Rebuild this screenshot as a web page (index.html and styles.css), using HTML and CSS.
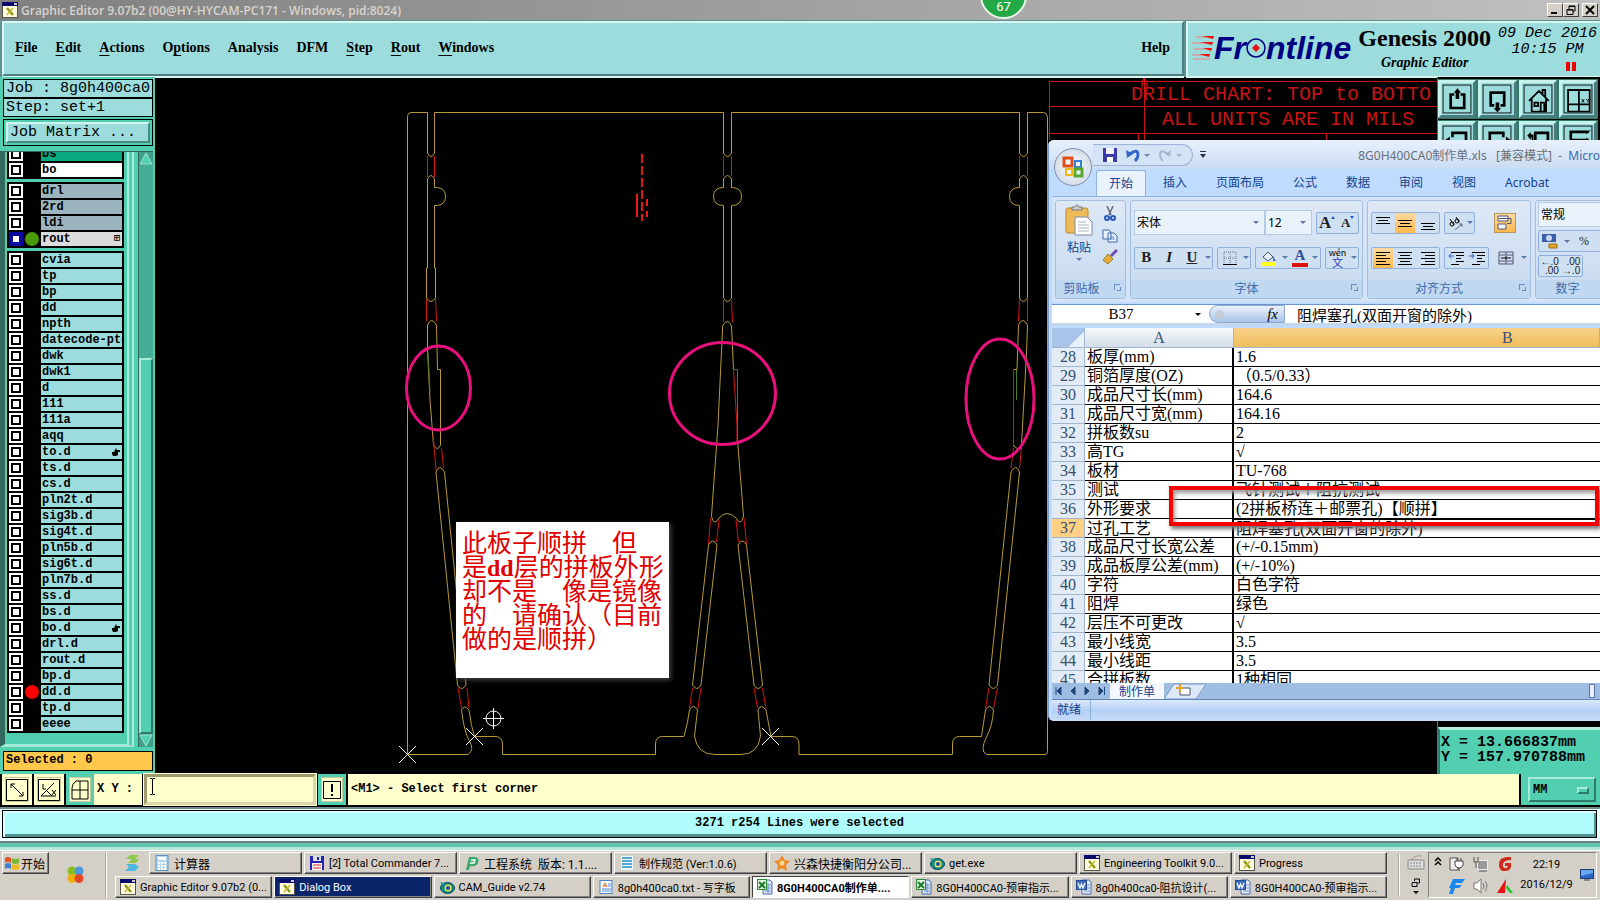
FILE: index.html
```html
<!DOCTYPE html>
<html lang="en">
<head>
    <meta charset="UTF-8">
    <meta name="viewport" content="width=device-width, initial-scale=1.0">
    <title>Graphic Editor</title>
    <link rel="stylesheet" href="styles.css">
</head>
<body>

<!-- Shared icons -->
<svg width="0" height="0" class="defs">
    <symbol id="i-x" viewBox="0 0 16 16"><rect x="0.5" y="0.5" width="15" height="15" fill="#fffbe0" stroke="#55554a"/><rect width="16" height="4" fill="#0a0a6a"/><path d="M12 1h3v2h-3z" fill="#ccc"/><path d="M5 6l6 7" stroke="#8d9a10" stroke-width="2.4"/><path d="M11 6l-6 7" stroke="#c5b52a" stroke-width="1.4"/></symbol>
    <symbol id="i-xls" viewBox="0 0 16 16"><path d="M6 1h7l2 2v12H6z" fill="#dce8fa" stroke="#4668a8"/><path d="M8 6h6M8 9h6M8 12h6M11 4v10" stroke="#6f90cc"/><rect x="0.5" y="0.5" width="9" height="10" fill="#e0f2dc" stroke="#2f8a3a"/><path d="M2 3l6 6M8 3L2 9" stroke="#1d7a2c" stroke-width="2"/></symbol>
    <symbol id="i-doc" viewBox="0 0 16 16"><path d="M6 1h7l2 2v12H6z" fill="#e6eefa" stroke="#4668a8"/><path d="M8 6h6M8 9h6M8 12h6" stroke="#6f90cc"/><rect x="0.5" y="1.5" width="10" height="9" fill="#3f6fc4" stroke="#234b94"/><path d="M2 4l2 5 1.500-4L7 9l2-5" fill="none" stroke="#fff" stroke-width="1.300"/></symbol>
    <symbol id="i-eye" viewBox="0 0 16 16"><ellipse cx="8.500" cy="9" rx="7" ry="5.500" fill="#168a86" stroke="#0b4d56"/><circle cx="9" cy="9" r="3.500" fill="#e8e060"/><circle cx="9" cy="9" r="2" fill="#1450a0"/><path d="M1 3l5 1-3 2z" fill="#19a0a0"/></symbol>
</svg>

<div class="titlebar">
    <svg width="16" height="16"><use href="#i-x"/></svg>
    <span class="title">Graphic Editor 9.07b2 (00@HY-HYCAM-PC171 - Windows, pid:8024)</span>
    <button class="win-btn" aria-label="Minimize"><svg width="10" height="10"><path d="M1 8h6" stroke="#000" stroke-width="2"/></svg></button>
    <button class="win-btn" aria-label="Restore"><svg width="10" height="10"><path d="M3 4V1h6v5H7M3 1.500h6M1 4.500h6v5H1zM1 5h6" fill="none" stroke="#000"/></svg></button>
    <button class="win-btn close" aria-label="Close"><svg width="10" height="10"><path d="M1 1l8 8M9 1L1 9" stroke="#000" stroke-width="2"/></svg></button>
</div>
<div class="badge">67</div>

<header class="header">
    <nav class="menubar">
        <button><u>F</u>ile</button>
        <button><u>E</u>dit</button>
        <button><u>A</u>ctions</button>
        <button>O<u>p</u>tions</button>
        <button>Analysis</button>
        <button>DFM</button>
        <button><u>S</u>tep</button>
        <button><u>R</u>out</button>
        <button><u>W</u>indows</button>
        <button class="help">Help</button>
    </nav>
    <div class="brand">
        <div class="logo">
            <svg width="22" height="26"><path d="M4 2h18M0 8h20M2 14h18M0 20h18M1 24h17" stroke="#f08080"/><path d="M10 1h12l-1 3zM8 7h13l-1 3zM11 13h9l-1 3zM7 19h11l-1 3z" fill="#f01010"/></svg>
            <span>Fr</span><svg width="20" height="22"><circle cx="10" cy="11" r="9" fill="none" stroke="#000080" stroke-width="1.500"/><path d="M10 7l4 4-4 4-4-4z" fill="#f01010"/></svg><span>ntline</span>
        </div>
        <div class="product">
            <div class="product-name">Genesis 2000</div>
            <div class="product-sub">Graphic Editor</div>
        </div>
        <div class="date">
            <div>09 Dec 2016</div>
            <div>10:15 PM</div>
            <div class="pause"><i></i><i></i></div>
        </div>
    </div>
</header>

<main class="main">
    <aside class="side">
        <div class="info">Job : 8g0h400ca0</div>
        <div class="info">Step: set+1</div>
        <div class="matrix"><button>Job Matrix ...</button></div>
        <div class="layers">
            <div class="layer-list" id="layers"></div>
            <div class="scroll">
                <svg width="14" height="13"><rect width="14" height="13" fill="#3f9f88"/><path d="M7 1L1 12h12z" fill="#52ceb0" stroke="#9fe8d4"/></svg>
                <div class="trough"><div class="thumb"></div></div>
                <svg width="14" height="13"><rect width="14" height="13" fill="#3f9f88"/><path d="M1 1h12L7 12z" fill="#52ceb0" stroke="#9fe8d4"/></svg>
            </div>
        </div>
        <div class="selected">Selected : 0</div>
    </aside>

    <section class="canvas">
        <svg width="1282" height="697" viewBox="155 77 1282 697">
            <!-- drill chart -->
            <g stroke="#c81414" fill="none">
                <path d="M1049.500 140V81.500H1437M1049 106.500H1437M1049 133.500H1437M1144.500 78V140M1138.500 134v6M1326.500 134v6"/>
                <path d="M1142 90v-8l2-4 3 4v8M1142 84h5" stroke="#f01414"/>
            </g>
            <g class="chart-text">
                <text x="1131" y="100">DRILL CHART: TOP to BOTTO</text>
                <text x="1162" y="125">ALL UNITS ARE IN MILS</text>
            </g>

            <!-- panel outline -->
            <g class="gold">
                <path d="M427.500 112.500H411q-3.500 0-3.500 4V754.500H468q7-5 1-14Q464 731 461.500 710q3-6 7.500 0 2 16 5.500 26.500H495q7.500 0 7.500 8v10H655.500V744q0-7.500 7-7.500H684Q688 722 689.500 710q4-7 8 0L694.500 736Q697 754.500 715 754.500H741Q758 754.500 760.500 736L758 710q3-7 8 0L771 736.500H792q7 0 7 8v10H952.500V744q0-7.500 7-7.500H981.500L985.500 710q4-7 8 0-1 16-7 27-7 14 0 17.500H1045q2.500 0 2.500-3V117q-1-4.500-4-4.500H1027.500V153q-4 7-8 0V112.500H731.500V153q-4 7-8 0V112.500H434.500V153q-3.500 7-7 0z"/>
                <path d="M427.500 268V179q3.500-7 7 0V187.500h3q8 1 8 9t-8 9h-3V268h1V298q-4.500 7-9 0V268z"/>
                <path d="M723.500 298V205.500q-10 0-10-9t10-9V179q4-7 8 0v8.500q10 0 10 9t-10 9V298q-4 7-8 0"/>
                <path d="M1019.500 298V205.500q-10 0-10-9t10-9V179q4-7 8 0V298q-4 7-8 0"/>
                <path d="M433.500 445L430 400 427.500 350V325q4-9 9 0L437.500 369.500h3V445q-3 7-7 0"/>
                <path d="M711.500 516L718 425 722.500 330V326q5-9 9 0l2 43M711.500 516q2 11 7.500 2 8-9 17 0 5 9 7.500-2L737.500 440"/>
                <path d="M1013.500 445V369.500h3.500L1018.500 325q4-9 9 0L1026.500 353 1021.500 445q-4 7-8 0"/>
                <path d="M444.500 472q-5-9-8.500 0L457.500 685q4 7 8.500 0z"/>
                <path d="M708.500 545q4-8 8.500 0L701 685q-4 7-8.500 0zM746.500 545q-4-8-8.500 0L754 685q4 7 8.500 0z"/>
                <path d="M1011 472q5-9 8.500 0L997.500 685q-4 7-8.500 0z"/>
            </g>
            <g class="red">
                <path d="M427.500 156v21M434.500 156v21M723.500 156v20M731.500 156v20M1019.500 156v20M1027.500 156v20"/>
                <path d="M426.500 299v22M435.500 299l1 22M723.500 300v22M731.500 300l1 22M1019.500 299l-1 22M1027.500 299v22"/>
                <path d="M433 434L436 470M441.500 448L443.500 468M1013.500 448L1011 468M1021.500 448L1019.500 468"/>
                <path d="M710.500 518L708.500 544M719 520L716.500 542M744 518L746.500 544M736 520L738.500 542"/>
                <path d="M458 688L461.500 708M467 688L469 708M692.500 688L689.500 708M701 688L698 708M762.500 688L766 708M754 688L757.500 708M989 688L985.500 708M997.500 688L993.500 708"/>
                <path d="M733.500 370L737 425V442M1013.500 369V447"/>
            </g>
            <path d="M733.500 369.500h4V440M1016.500 370v30M428 352l2 40" fill="none" stroke="#4c7c28"/>
            <path d="M642 154V221" stroke="#e01818" stroke-width="2" stroke-dasharray="9 3"/>
            <path d="M637 194v23M647 199v7M647 211v6" stroke="#f01818" stroke-width="2"/>

            <!-- markers -->
            <g stroke="#fff" fill="none">
                <path d="M399 746l17 17M416 746l-17 17M466 728l17 17M483 728l-17 17M762 728l17 17M779 728l-17 17"/>
                <circle cx="493.500" cy="718.500" r="7.500"/>
                <path d="M483 718.500h21M493.500 708v21"/>
            </g>
            <g stroke="#e8107c" stroke-width="3" fill="none">
                <ellipse cx="438.500" cy="388" rx="32" ry="42"/>
                <ellipse cx="722.500" cy="393.500" rx="53" ry="51"/>
                <ellipse cx="1000" cy="399" rx="34" ry="60"/>
            </g>
        </svg>
    </section>

    <aside class="tools">
        <div class="tool-grid">
            <button aria-label="Pan up"><svg width="32" height="32"><path d="M12 10H8v15h15V10h-4" class="thick"/><path d="M15.500 3l4 5h-2v7h-4V8h-2z"/></svg></button>
            <button aria-label="Pan down"><svg width="32" height="32"><path d="M12 22H8V8h15v14h-4" class="thick"/><path d="M15.500 30l4-5h-2v-6h-4v6h-2z"/></svg></button>
            <button aria-label="Home"><svg width="32" height="32"><path d="M5 17L16 6l11 11M8 15v14h16V15M20 10V5h3v8M11 19h4v4h-4zM18 29V19h4v10" class="house"/></svg></button>
            <button aria-label="Zoom XY"><svg width="32" height="32"><path d="M4 5h24v24H4zM4 21h24M16 5v24" class="house"/><path d="M19 15l3 4M22 15l-3 4M24 15l2 2 1-2M26 17v2" class="thin"/></svg></button>
            <button aria-label="Pan left"><svg width="32" height="32"><path d="M10 12V7h15v16H10" class="thick"/><path d="M2 15l5-4v8z"/></svg></button>
            <button aria-label="Pan right"><svg width="32" height="32"><path d="M22 12V7H7v16h15" class="thick"/><path d="M30 15l-5-4v8z"/></svg></button>
            <button aria-label="Previous"><svg width="32" height="32"><path d="M12 7h14v16H12z" class="thick"/><path d="M3 10l4-4v3h3v8H8v-5H7v3z"/></svg></button>
            <button aria-label="Zoom layers"><svg width="32" height="32"><path d="M27 6H7v9h20" class="thick"/><path d="M24 8l5-4M24 13l5 4" class="thin"/></svg></button>
        </div>
        <div class="coords">
            <div>X = 13.666837mm</div>
            <div>Y = 157.970788mm</div>
        </div>
    </aside>
</main>

<div class="prompt">
    <button class="p-btn" aria-label="Select by line"><svg width="22" height="22"><path d="M.5.5h21v21H.5zM5 5l12 12M5 9V5h4M17 13v4h-4" class="thin"/></svg></button>
    <button class="p-btn" aria-label="Angle"><svg width="22" height="22"><path d="M.5.5h21v21H.5zM3 17L16 4M3 17h15M5 5v5h3M9 12l5 5M14 11l4 5M18 11l-4 5" class="thin"/></svg></button>
    <button class="p-btn green" aria-label="Grid"><svg width="18" height="20"><path d="M1 19V8q0-4 4-7h12v18zM9 1v18M1 10h16" class="thin"/></svg></button>
    <label for="xy">X Y :</label>
    <input id="xy" type="text">
    <button class="p-btn green" aria-label="Alert"><svg width="18" height="18"><path d="M.5.5h17v17H.5z" class="thin"/><path d="M8 3h2v8H8zM8 13h2v2H8z"/></svg></button>
    <div class="hint">&lt;M1&gt; - Select first corner</div>
    <div class="units">
        <select aria-label="Units"><option>MM</option></select>
        <i></i>
    </div>
    <!-- text cursor over the XY box -->
    <svg class="ibeam" width="7" height="17"><path d="M1 .5h2l.5 1 .5-1h2M3.500 1v15M1 16.500h2l.5-1 .5 1h2" class="thin"/></svg>
</div>
<div class="message"><div>3271 r254 Lines were selected</div></div>
<div class="strip"></div>

<footer class="taskbar">
    <button class="start"><svg width="18" height="18"><path d="M2 4q3-2 6 0v5q-3-2-6 0z" fill="#e8502a"/><path d="M9 4q3 2 7 0v5q-4 2-7 0z" fill="#78b832"/><path d="M2 10q3-2 6 0v5q-3-2-6 0z" fill="#3a80d8"/><path d="M9 10q3 2 7 0v5q-4 2-7 0z" fill="#f0b820"/></svg>开始</button>
    <svg class="quick" width="18" height="18"><circle cx="5" cy="5" r="4.500" fill="#88c020"/><circle cx="12" cy="5" r="4.500" fill="#4898e0"/><circle cx="5" cy="12.500" r="4.500" fill="#f0b010"/><circle cx="12" cy="12.500" r="4.500" fill="#e04828"/></svg>
    <div class="tasks">
        <div class="task-row">
            <svg class="s-icon" width="18" height="18"><path d="M3 5l4-4h9l-4 4h4l-3 4H5l4-4z" fill="#8cc84a"/><path d="M16 13l-4 4H2l4-4-3-3h9z" fill="#50b8e0"/></svg>
            <button class="task cjk"><svg width="16" height="16"><rect x="2" y="0.500" width="12" height="15" fill="#b8d8f0" stroke="#5890c0"/><rect x="4" y="2" width="8" height="3" fill="#f4faff"/><path d="M4 8h8M4 11h8M4 14h8" stroke="#fff" stroke-width="2" stroke-dasharray="2 1"/></svg>计算器</button>
            <button class="task"><svg width="16" height="16"><path d="M1 1h14v14H1z" fill="#2424b0"/><path d="M4 1h8v5H4z" fill="#dde"/><path d="M8 2h2v3H8z" fill="#2424b0"/><path d="M3 8h10v7H3z" fill="#fff"/><path d="M4 10h8M4 13h8" stroke="#d02020"/></svg>[2] Total Commander 7...</button>
            <button class="task cjk"><svg width="16" height="16"><path d="M5 2h6q5 1 3 6-2 4-8 3l-1 4H2z" fill="#38a868"/><path d="M7 5h4l-1 3H6" stroke="#fff" stroke-width="1.500" fill="none"/></svg>工程系统&nbsp; 版本: 1.1....</button>
            <button class="task"><svg width="16" height="16"><path d="M2 1h12v14H2z" fill="#eaf6fc"/><path d="M3 3h10M3 6h10M3 9h10M3 12h10" stroke="#2a90c0" stroke-width="1.500"/></svg>制作规范 (Ver:1.0.6)</button>
            <button class="task cjk"><svg width="16" height="16"><path d="M8 0l2.500 5 5.500 1-4 4 1 6-5-3-5 3 1-6-4-4 5.500-1z" fill="#ee8820"/><circle cx="8" cy="8" r="2.500" fill="#ffd890"/></svg>兴森快捷衡阳分公司...</button>
            <button class="task"><svg width="16" height="16"><use href="#i-eye"/></svg>get.exe</button>
            <button class="task"><svg width="16" height="16"><use href="#i-x"/></svg>Engineering Toolkit 9.0...</button>
            <button class="task"><svg width="16" height="16"><use href="#i-x"/></svg>Progress</button>
        </div>
        <div class="task-row">
            <button class="task"><svg width="16" height="16"><use href="#i-x"/></svg>Graphic Editor 9.07b2 (0...</button>
            <button class="task flash"><svg width="16" height="16"><use href="#i-x"/></svg>Dialog Box</button>
            <button class="task"><svg width="16" height="16"><use href="#i-eye"/></svg>CAM_Guide v2.74</button>
            <button class="task"><svg width="16" height="16"><rect x="2" y="1.500" width="12" height="13" fill="#f4f8fe" stroke="#5080b8"/><path d="M5 8l2-4 2 4M6 7h2" stroke="#e07020" fill="none"/><path d="M10 5h3M10 7h3M4 10h9M4 12h9" stroke="#5890d0"/></svg>8g0h400ca0.txt - 写字板</button>
            <button class="task active"><svg width="16" height="16"><use href="#i-xls"/></svg>8G0H400CA0制作单....</button>
            <button class="task"><svg width="16" height="16"><use href="#i-xls"/></svg>8G0H400CA0-预审指示...</button>
            <button class="task"><svg width="16" height="16"><use href="#i-doc"/></svg>8g0h400ca0-阻抗设计(...</button>
            <button class="task"><svg width="16" height="16"><use href="#i-doc"/></svg>8G0H400CA0-预审指示...</button>
        </div>
    </div>
    <div class="lang">
        <svg width="18" height="16"><rect x="1" y="6" width="16" height="9" rx="1" fill="#ddd" stroke="#888"/><path d="M3 9h12M3 12h12M5 6q2-5 10-4" stroke="#888" fill="none" stroke-dasharray="2 1"/></svg>
        <svg width="10" height="18"><path d="M3.500 3V1h5v4h-2M1 4.500h5v4H1z" fill="none" stroke="#000"/><path d="M2 13h6l-3 3z"/></svg>
    </div>
    <div class="tray">
        <svg class="chev" width="8" height="10"><path d="M1 4l3-3 3 3M1 8l3-3 3 3" fill="none" stroke="#000" stroke-width="1.500"/></svg>
        <div class="tray-icons">
            <svg width="16" height="16"><path d="M1 2h8v12H1z" fill="#eee" stroke="#555"/><path d="M6 5h8v4q-1 3-4 3t-4-3zM8 2v3M12 2v3M10 12v3" fill="#fff" stroke="#444"/></svg>
            <svg width="16" height="16"><rect x="4.500" y="4.500" width="10" height="9" fill="#999" stroke="#eee"/><path d="M1 1v5h4V1M3 6v6M6 15h8" stroke="#555" fill="none"/></svg>
            <svg width="16" height="16"><path d="M14 1Q2 0 2 8t6 7q7 0 6-8H8v3h3q-1 3-3 2-3-1-2-4 1-4 8-4z" fill="#d02818"/></svg>
            <svg width="16" height="16"><path d="M4 1h12l-3 4H7l-1 2h7l-3 3H6l-2 6H0l2-6H0z" fill="#1888f0"/></svg>
            <svg width="16" height="16"><path d="M1 5h3l4-4v14l-4-4H1z" fill="#fff" stroke="#777"/><path d="M10 5q2 3 0 6M12 3q4 5 0 10" fill="none" stroke="#777"/></svg>
            <svg width="16" height="16"><path d="M9 1L0 15h8z" fill="#e81010"/><path d="M10 7l6 8h-3l-4-5z" fill="#18c828"/></svg>
        </div>
        <div class="clock"><span>22:19</span><span>2016/12/9</span></div>
        <svg width="14" height="14"><rect x="0.500" y="1.500" width="13" height="9" fill="#2a68c8" stroke="#1a3a70"/><path d="M1 2h12v3L1 8z" fill="#68a8f0"/><path d="M4 12h6" stroke="#888" stroke-width="2"/></svg>
    </div>
</footer>

<!-- Sticky note -->
<div class="note" lang="zh">此板子顺拼　但<br>是<b>dd</b>层的拼板外形<br>却不是　像是镜像<br>的　请确认（目前<br>做的是顺拼）</div>

<!-- Spreadsheet window -->
<div class="excel" lang="zh">
    <div class="x-title">
        <div class="orb"><svg width="24" height="24"><path d="M3 3h8v8H3z" fill="none" stroke="#e05018" stroke-width="3"/><path d="M14 6h6v6h-6z" fill="none" stroke="#3a80d0" stroke-width="2"/><path d="M5 14h6v6H5z" fill="none" stroke="#f0b820" stroke-width="2"/><path d="M14 14h7v7h-7z" fill="none" stroke="#58a830" stroke-width="3"/></svg></div>
        <div class="qat">
            <svg width="14" height="14"><path d="M0 0h14v14H0z" fill="#3a3aa8"/><path d="M3 0h8v6H3z" fill="#f0f0fa"/><path d="M4 9h6v5H4z" fill="#fff"/></svg>
            <svg width="24" height="14"><path d="M4 6q8-6 8 1 0 3-3 6" stroke="#3466c8" stroke-width="3" fill="none"/><path d="M0 2l1 8 6-4z" fill="#3466c8"/><path d="M18 6h6l-3 3z" fill="#6a88b8"/></svg>
            <svg width="24" height="14"><path d="M9 6q-8-6-8 1 0 3 3 6" stroke="#a8b8d0" stroke-width="2" fill="none"/><path d="M12 2l-1 7-5-3z" fill="#a8b8d0"/><path d="M17 6h6l-3 3z" fill="#a8b8d0"/></svg>
        </div>
        <svg width="8" height="10"><path d="M1 1.500h6" stroke="#234"/><path d="M1 4h6L4 8z" fill="#234"/></svg>
        <div class="x-name">8G0H400CA0制作单.xls&nbsp;&nbsp; [兼容模式]&nbsp; -&nbsp; <b>Micro</b></div>
    </div>
    <nav class="x-tabs">
        <button class="on">开始</button><button>插入</button><button>页面布局</button><button>公式</button><button>数据</button><button>审阅</button><button>视图</button><button>Acrobat</button>
    </nav>
    <div class="ribbon">
        <div class="group g-clip">
            <div class="g-body">
                <button class="paste"><svg width="28" height="32"><rect x="1" y="4" width="22" height="25" rx="2" fill="#eebb58" stroke="#b98a34"/><path d="M7 6V3h3q2-4 4 0h3v3z" fill="#ccc" stroke="#777"/><path d="M10 13h12l5 5v13H10z" fill="#fff" stroke="#7a8aa8"/><path d="M13 18h8M13 21h11M13 24h11M13 27h11" stroke="#a8b4c8"/></svg><span>粘贴</span><i class="arr"></i></button>
                <div class="clip-col">
                    <svg width="12" height="16"><path d="M3 0l4 9M9 0L5 9" stroke="#667" stroke-width="1.500"/><circle cx="3" cy="12" r="2" fill="none" stroke="#2858b8" stroke-width="2"/><circle cx="9" cy="12" r="2" fill="none" stroke="#2858b8" stroke-width="2"/></svg>
                    <svg width="16" height="14"><path d="M1 1h6l2 2v7H1zM6 4h6l3 3v6H6z" fill="#e8f0fc" stroke="#3c68b0"/><path d="M8 8h4M8 10h5" stroke="#6088c8"/></svg>
                    <svg width="16" height="16"><path d="M15 1L9 7" stroke="#7050b0" stroke-width="3"/><path d="M6 5l5 5-5 5-5-4z" fill="#e0b038" stroke="#a07820"/></svg>
                </div>
            </div>
            <div class="g-name">剪贴板<i></i></div>
        </div>
        <div class="group g-font">
            <div class="g-body rows">
                <div class="g-row">
                    <div class="combo font"><select aria-label="字体"><option>宋体</option></select><i class="arr"></i></div>
                    <div class="combo size"><select aria-label="字号"><option>12</option></select><i class="arr"></i></div>
                    <div class="set grow"><button class="big">A<i class="tri up"></i></button><button class="small">A<i class="tri"></i></button></div>
                </div>
                <div class="g-row">
                    <div class="set w79"><button class="b">B</button><button class="it">I</button><button class="un">U</button><i class="arr"></i></div>
                    <div class="set w34"><button aria-label="边框"><svg width="14" height="14"><path d="M1 1h12v12M1 1v12M7 1v12M1 7h12" stroke="#678" stroke-dasharray="1 1" fill="none"/><path d="M0 13.500h14" stroke="#000"/></svg></button><i class="arr"></i></div>
                    <div class="set w66"><button aria-label="填充颜色"><svg width="17" height="16"><path d="M3 7l5-5 5 5-5 4z" fill="#e8eef8" stroke="#456"/><path d="M13 6l3 5h-3z" fill="#3c68c0"/><path d="M1 12h15v4H1z" fill="#ffff20"/></svg></button><i class="arr"></i><button class="fc">A</button><i class="arr"></i></div>
                    <div class="set w34"><button class="wen"><small>wén</small>文</button><i class="arr"></i></div>
                </div>
            </div>
            <div class="g-name">字体<i></i></div>
        </div>
        <div class="group g-align">
            <div class="g-body rows">
                <div class="g-row">
                    <div class="set w68"><button aria-label="顶端对齐"><svg width="14" height="14" class="ln"><path d="M0 1.500h14M2 4.500h10M0 7.500h14"/></svg></button><button class="on" aria-label="垂直居中"><svg width="14" height="14" class="ln"><path d="M0 4.500h14M2 7.500h10M0 10.500h14"/></svg></button><button aria-label="底端对齐"><svg width="14" height="14" class="ln"><path d="M0 7.500h14M2 10.500h10M0 13.500h14"/></svg></button></div>
                    <div class="set w31"><button aria-label="方向"><svg width="16" height="16" class="ln"><circle cx="4" cy="9" r="2"/><path d="M2 4l4 6M8 2l3 5"/><circle cx="9" cy="6" r="2"/><path d="M7 15l7-6M14 12V9h-3" stroke="#667"/></svg></button><i class="arr"></i></div>
                    <button class="wrap on" aria-label="自动换行"><svg width="16" height="16"><path d="M1 1h10v5H1zM1 9h8v5H1z" fill="#f4f8fc" stroke="#557"/><path d="M2 3.500h12v5h-4" fill="none" stroke="#557"/></svg></button>
                </div>
                <div class="g-row">
                    <div class="set w68"><button class="on" aria-label="左对齐"><svg width="14" height="14" class="ln"><path d="M0 1.500h14M0 4.500h10M0 7.500h14M0 10.500h10M0 13.500h14"/></svg></button><button aria-label="居中"><svg width="14" height="14" class="ln"><path d="M0 1.500h14M2 4.500h10M0 7.500h14M2 10.500h10M0 13.500h14"/></svg></button><button aria-label="右对齐"><svg width="14" height="14" class="ln"><path d="M0 1.500h14M4 4.500h10M0 7.500h14M4 10.500h10M0 13.500h14"/></svg></button></div>
                    <div class="set w45"><button aria-label="减少缩进"><svg width="16" height="14" class="ln"><path d="M3 1.500h13M8 4.500h8M8 7.500h5M8 10.500h8M3 13.500h8"/><path d="M6 5H1M3 2.500L1 5l2 2.500" stroke="#2a5ac8"/></svg></button><button aria-label="增加缩进"><svg width="16" height="14" class="ln"><path d="M3 1.500h13M8 4.500h8M8 7.500h5M8 10.500h8M3 13.500h8"/><path d="M0 5h5M3 2.500L5 5 3 7.500" stroke="#2a5ac8"/></svg></button></div>
                    <button class="wrap" aria-label="合并"><svg width="16" height="14" class="ln"><path d="M1 1h14v12H1zM1 4h14M1 10h14M8 1v3M8 10v3" stroke="#557"/><path d="M3 7h3M10 7h3M7 6h2v2H7z"/></svg></button><i class="arr"></i>
                </div>
            </div>
            <div class="g-name">对齐方式<i></i></div>
        </div>
        <div class="group g-num">
            <div class="g-body rows">
                <div class="combo"><select aria-label="数字格式"><option>常规</option></select></div>
                <div class="set wide"><button aria-label="货币"><svg width="18" height="16"><path d="M1 1h14v8H1z" fill="#3c60a8"/><circle cx="8" cy="5" r="3" fill="#c8d8f0"/><path d="M8 11h8v4H8z" fill="#e0a828" stroke="#a07010"/></svg></button><i class="arr"></i><button>%</button></div>
                <div class="set dec"><button>←.0<br>.00</button><button>.00<br>→.0</button></div>
            </div>
            <div class="g-name">数字</div>
        </div>
    </div>
    <div class="formula">
        <input class="cell-ref" aria-label="名称框" value="B37"><i class="arr black"></i>
        <span class="fx"><b></b><em>fx</em></span>
        <input class="cell-text" aria-label="编辑栏" value="阻焊塞孔(双面开窗的除外)">
    </div>
    <div class="grid">
        <table>
            <colgroup><col class="c-num"><col class="c-a"><col></colgroup>
            <thead><tr><th class="corner"></th><th>A</th><th class="col-b">B</th></tr></thead>
            <tbody id="rows"></tbody>
        </table>
    </div>
    <div class="sheets">
        <svg width="52" height="10"><path d="M1 1v8M6 1v8L2 5zM20 1v8l-4-4zM30 1v8l4-4zM44 1v8l4-4zM49.500 1v8" fill="#1c4478" stroke="#1c4478"/></svg>
        <button>制作单</button>
        <svg width="42" height="16"><path d="M0 16L10 1h32L32 16z" fill="#dce8f8" stroke="#7a98c8"/><path d="M16 5h10v7H16z" fill="#fff" stroke="#456"/><path d="M16 1v8M12 5h8" stroke="#e8a020" stroke-width="2"/></svg>
        <div class="hscroll"></div>
    </div>
    <div class="status"><span>就绪</span></div>
</div>
<div class="mark"></div>

<script>
    // [name, colour class, marker, dot]
    const groups = [
        [['bs', 'dark'], ['bo', 'white']],
        [['drl', 'gray'], ['2rd', 'gray'], ['ldi', 'gray'], ['rout', 'light', '⊞', 'green']],
        ['cvia', 'tp', 'bp', 'dd', 'npth', 'datecode-pte', 'dwk', 'dwk1', 'd', '111', '111a', 'aqq',
         ['to.d', '', 'hand'], 'ts.d', 'cs.d', 'pln2t.d', 'sig3b.d', 'sig4t.d', 'pln5b.d', 'sig6t.d',
         'pln7b.d', 'ss.d', 'bs.d', ['bo.d', '', 'hand'], 'drl.d', 'rout.d', 'bp.d',
         ['dd.d', '', '', 'red'], 'tp.d', 'eeee']
    ];
    const hand = '<svg width="8" height="8"><path d="M4 0l1 2h3v2H6v3l-2 1H1L0 6V4h2z"/></svg>';

    let html = '';
    groups.forEach(function(group) {
        html += '<div class="layer-group">';
        group.forEach(function(item) {
            const [name, color = '', mark = '', dot = ''] = [].concat(item);
            const icon = mark === 'hand' ? hand : mark;
            html += '<label class="layer ' + color + '"><input type="checkbox">' +
                '<span class="dot ' + dot + '"></span>' +
                '<span class="layer-name">' + name + (icon ? '<i>' + icon + '</i>' : '') + '</span></label>';
        });
        html += '</div>';
    });
    document.getElementById('layers').innerHTML = html;

    const rows = [
        ['板厚(mm)', '1.6'], ['铜箔厚度(OZ)', '（0.5/0.33）'], ['成品尺寸长(mm)', '164.6'],
        ['成品尺寸宽(mm)', '164.16'], ['拼板数su', '2'], ['高TG', '√'], ['板材', 'TU-768'],
        ['测试', '飞针测试＋阻抗测试'], ['外形要求', '(2拼板桥连＋邮票孔)【顺拼】'],
        ['过孔工艺', '阻焊塞孔(双面开窗的除外)'], ['成品尺寸长宽公差', '(+/-0.15mm)'],
        ['成品板厚公差(mm)', '(+/-10%)'], ['字符', '白色字符'], ['阻焊', '绿色'], ['层压不可更改', '√'],
        ['最小线宽', '3.5'], ['最小线距', '3.5'], ['合拼板数', '1种相同']
    ];
    document.getElementById('rows').innerHTML = rows.map(function(r, i) {
        const n = i + 28;
        return '<tr' + (n === 37 ? ' class="current"' : '') + '><th>' + n + '</th><td>' + r[0] + '</td><td>' + r[1] + '</td></tr>';
    }).join('');
</script>

</body>
</html>
```

FILE: styles.css
```css
* {
    box-sizing: border-box;
}

body {
    margin: 0;
    min-height: 100vh;
    display: flex;
    flex-direction: column;
    position: relative;
    overflow: hidden;
    background-color: #000;
    font-family: "Liberation Mono", "Noto Sans CJK SC", monospace;
    font-size: 12px;
    color: #000;
}

button, select, input {
    font: inherit;
    color: inherit;
    margin: 0;
    padding: 0;
    border: none;
    border-radius: 0;
    background: none;
}

select {
    appearance: none;
}

svg {
    display: block;
    flex: none;
}

.defs {
    position: absolute;
}

.thin {
    fill: none;
    stroke: #000;
}

.house {
    fill: none;
    stroke: #000;
    stroke-width: 2;
}

.thick {
    fill: none;
    stroke: #000;
    stroke-width: 3;
}

/* Title bar */
.titlebar {
    height: 20px;
    display: flex;
    align-items: center;
    gap: 3px;
    padding: 0 2px;
    background: linear-gradient(to right, #808080, #c0c0c0);
}

.title {
    flex: 1;
    font-family: "Open Sans", sans-serif;
    font-weight: 600;
    font-size: 12px;
    color: #d8d4cc;
}

.win-btn {
    width: 16px;
    height: 14px;
    margin-right: -3px;
    padding-left: 2px;
    background-color: #d4d0c8;
    border: 1px solid;
    border-color: #fff #404040 #404040 #fff;
}

.win-btn.close {
    margin: 0 0 0 3px;
}

.badge {
    position: absolute;
    top: -28px;
    left: 980px;
    width: 47px;
    height: 47px;
    padding-top: 25px;
    border: 2px solid #e8f8e8;
    border-radius: 50%;
    background-color: #22a844;
    color: #fff;
    font-family: Roboto, sans-serif;
    font-size: 13px;
    text-align: center;
}

/* Menu and brand */
.header {
    height: 57px;
    display: flex;
    gap: 2px;
    padding: 1px 0 1px 2px;
    background-color: #5f9191;
}

.menubar, .brand {
    display: flex;
    background-color: #9cdcdc;
    border: 2px solid;
    border-color: #d8f6f2 #4f7f80 #4f7f80 #d8f6f2;
    box-shadow: 0 2px 0 #d8f6f2;
}

.menubar {
    flex: 1;
    align-items: center;
    gap: 18px;
    padding: 0 12px 2px 11px;
    font-family: "Liberation Serif", serif;
    font-weight: bold;
    font-size: 14px;
}

.menubar u {
    text-underline-offset: 3px;
}

.help {
    margin-left: auto;
}

.brand {
    width: 414px;
    border-right: none;
    border-bottom: none;
    padding: 3px 3px 0 4px;
    justify-content: space-between;
}

.logo {
    display: flex;
    align-items: center;
    height: 44px;
    font-family: "Liberation Sans", sans-serif;
    font-weight: bold;
    font-style: italic;
    font-size: 32px;
    color: #000080;
}

.product {
    text-align: center;
    font-family: "Liberation Serif", serif;
    font-weight: bold;
}

.product-name {
    font-size: 24px;
    line-height: 24px;
}

.product-sub {
    font-size: 14px;
    line-height: 26px;
    font-style: italic;
}

.date {
    font-size: 15px;
    line-height: 16px;
    font-style: italic;
    text-align: center;
}

.pause {
    display: flex;
    justify-content: flex-end;
    gap: 2px;
    padding: 4px 21px 0 0;
}

.pause i {
    width: 4px;
    height: 9px;
    background-color: #f00000;
}

/* Main area */
.main {
    flex: 1;
    display: flex;
    min-height: 0;
}

.side {
    width: 155px;
    padding: 2px 2px 3px 3px;
    display: flex;
    flex-direction: column;
    background-color: #52ceb0;
}

.info {
    height: 19px;
    padding-left: 2px;
    border: 1px solid #000;
    background-color: #9cdcdc;
    font-size: 15px;
    line-height: 17px;
    white-space: nowrap;
}

.matrix {
    margin-top: 2px;
    height: 27px;
    padding: 2px;
    border: 1px solid #000;
    background-color: #52ceb0;
    font-size: 15px;
}

.matrix button {
    width: 100%;
    height: 21px;
    padding-left: 2px;
    text-align: left;
    background-color: #9cdcdc;
    border: 2px solid;
    border-color: #d0f4ee #4a8a80 #4a8a80 #d0f4ee;
}

.layers {
    flex: 1;
    min-height: 0;
    margin: 5px 0 4px -3px;
    display: flex;
    gap: 4px;
    border-top: 1px solid #2f6a5c;
}

.layer-list {
    flex: 1;
    padding-left: 2px;
    display: flex;
    flex-direction: column;
    gap: 3px;
    border-left: 5px solid #35685c;
    border-right: 7px double #a4ecd8;
    border-bottom: 3px solid #a4ecd8;
}

.layer-group {
    width: 117px;
    padding: 2px 2px 0;
    background-color: #000;
}

.layer-group:first-child {
    height: 27px;
    padding-top: 0;
    flex: none;
    display: flex;
    flex-direction: column;
    justify-content: flex-end;
    overflow: hidden;
}

.layer {
    display: flex;
    align-items: flex-start;
    flex: none;
    height: 16px;
}

.layer input {
    appearance: none;
    flex: none;
    width: 14px;
    height: 14px;
    border: 2px solid #fff;
    background-color: #fff;
    box-shadow: inset 0 0 0 2px #000;
}

.layer.light input {
    border-color: #0808a0;
    box-shadow: inset 0 0 0 2px #0808a0;
}

.dot {
    flex: none;
    width: 14px;
    height: 14px;
    margin: 0 2px;
    border-radius: 50%;
}

.dot.green {
    background-color: #4a9a08;
}

.dot.red {
    background-color: #f00;
}

.layer-name {
    flex: 1;
    min-width: 0;
    display: flex;
    height: 14px;
    padding-left: 1px;
    overflow: hidden;
    background-color: #9cdcdc;
    font-weight: bold;
    line-height: 14px;
    white-space: nowrap;
}

.layer-name i {
    margin: 3px 2px 0 auto;
    font-size: 10px;
    line-height: 8px;
    font-style: normal;
}

.dark .layer-name {
    background-color: #08a880;
}

.white .layer-name {
    background-color: #fff;
}

.gray .layer-name {
    background-color: #9cb4be;
}

.light .layer-name {
    background-color: #dcdcdc;
}

.scroll {
    width: 15px;
    display: flex;
    flex-direction: column;
    border-left: 1px solid #2f6a5c;
    background-color: #46ae96;
}

.trough {
    flex: 1;
    display: flex;
    align-items: flex-end;
}

.thumb {
    width: 100%;
    height: 66%;
    background-color: #52ceb0;
    border: 2px solid;
    border-color: #a4ecd8 #2f7a68 #2f7a68 #a4ecd8;
}

.selected {
    height: 20px;
    padding-left: 2px;
    border: 1px solid #000;
    background-color: #ffc84c;
    font-weight: bold;
    line-height: 17px;
}

.canvas {
    flex: 1;
    min-width: 0;
    overflow: hidden;
}

.gold {
    fill: none;
    stroke: #b89a38;
}

.red {
    fill: none;
    stroke: #d41414;
}

.chart-text {
    fill: #c81414;
    font-size: 20px;
}

.tools {
    width: 163px;
    display: flex;
    flex-direction: column;
    justify-content: space-between;
    background-color: #000;
    border-left: 1px solid #3a8a78;
}

.tool-grid {
    display: grid;
    grid-template-columns: repeat(4, 1fr);
    gap: 3px 2px;
    padding: 3px 3px 0 0;
}

.tool-grid button {
    height: 38px;
    display: flex;
    align-items: center;
    justify-content: center;
    background-color: #9cdcdc;
    border: 3px solid;
    border-color: #c8f2ee #4a7e7e #4a7e7e #c8f2ee;
    outline: 1px solid #2f7a68;
}

.tool-grid svg {
    transform: scale(0.9);
    border: 1px solid #000;
}

.coords {
    height: 47px;
    padding: 5px 0 0 1px;
    background-color: #52ceb0;
    border-top: 3px solid #b4f0e0;
    border-left: 2px solid #2f7a68;
    font-size: 15px;
    line-height: 15px;
    font-weight: bold;
}

/* Prompt line */
.prompt {
    height: 33px;
    position: relative;
    display: flex;
    border-bottom: 2px solid #000;
    padding-left: 2px;
    gap: 2px;
    font-weight: bold;
}

.p-btn {
    width: 30px;
    display: flex;
    align-items: center;
    justify-content: center;
    border: 3px solid #ffffcc;
    background-color: #ffffcc;
    box-shadow: inset 1px 1px #c8c898, inset -1px -1px #c8c898;
}

.p-btn.green {
    width: 28px;
    border: 3px solid #52ceb0;
}

.prompt label, .hint {
    padding: 0 0 0 3px;
    background-color: #ffffcc;
    line-height: 30px;
}

.prompt label {
    width: 48px;
    margin-left: -2px;
}

.prompt input {
    width: 172px;
    background-color: #ffffcc;
    border: 3px solid;
    border-color: #a09a70 #d8d8a8 #d8d8a8 #a09a70;
    outline: 1px solid #ffffcc;
}

.ibeam {
    position: absolute;
    left: 149px;
    top: 4px;
}

.hint {
    flex: 1;
}

.units {
    width: 79px;
    padding: 3px 4px 3px 7px;
    background-color: #52ceb0;
    position: relative;
}

.units select {
    width: 100%;
    height: 100%;
    padding-left: 3px;
    border: 2px solid;
    border-color: #a4ecd8 #2f7a68 #2f7a68 #a4ecd8;
}

.units i {
    position: absolute;
    right: 11px;
    top: 13px;
    width: 12px;
    height: 7px;
    border: 2px solid;
    border-color: #a4ecd8 #2f7a68 #2f7a68 #a4ecd8;
}

.message {
    height: 34px;
    padding: 1px 3px 4px 2px;
    background-color: #e8ffff;
    border-top: 2px solid #708c8c;
}

.message div {
    height: 28px;
    border: 1px solid #000;
    background-color: #b0fcfc;
    box-shadow: inset 2px 2px #d8ffff, inset -2px -3px #4f9090;
    font-weight: bold;
    line-height: 24px;
    text-align: center;
}

.strip {
    height: 9px;
    background-color: #5cc4ac;
    border-top: 2px solid #70807c;
    border-bottom: 3px solid #b8e8dc;
}

/* Taskbar */
.taskbar {
    height: 51px;
    display: flex;
    align-items: center;
    padding: 1px 3px 3px 2px;
    border-top: 1px solid #fff;
    background-color: #d4d0c8;
    font-family: Roboto, "Noto Sans CJK SC", sans-serif;
    font-size: 11px;
}

.start, .task {
    display: flex;
    align-items: center;
    height: 22px;
    border: 1px solid;
    border-color: #fff #404040 #404040 #fff;
    box-shadow: inset -1px -1px #808080;
}

.start {
    width: 47px;
    align-self: flex-start;
    font-size: 12px;
}

.quick {
    margin-left: 18px;
}

.tasks {
    flex: 1;
    min-width: 0;
    height: 46px;
    display: flex;
    flex-direction: column;
    justify-content: space-between;
    margin-left: 20px;
    padding-left: 8px;
    border-left: 2px groove #fff;
}

.task-row {
    display: flex;
    gap: 2px;
}

.s-icon {
    margin: 2px 6px 0 8px;
}

.task {
    flex: 1 1 0;
    min-width: 0;
    gap: 4px;
    padding: 0 4px;
    overflow: hidden;
    white-space: nowrap;
}

.task.cjk {
    font-size: 12px;
}

.task.flash {
    background-color: #0a246a;
    color: #fff;
}

.task.active {
    background-color: #fff;
    border-color: #404040 #fff #fff #404040;
    box-shadow: none;
    font-weight: bold;
}

.lang {
    height: 42px;
    margin-left: 11px;
    padding: 0 3px 0 7px;
    display: flex;
    flex-direction: column;
    align-items: center;
    justify-content: space-between;
    border-left: 2px groove #fff;
}

.tray {
    width: 169px;
    height: 46px;
    padding: 0 2px 0 5px;
    display: flex;
    align-items: center;
    gap: 7px;
    border: 1px solid;
    border-color: #808080 #fff #fff #808080;
}

.chev {
    align-self: flex-start;
    margin-top: 4px;
}

.tray-icons {
    display: grid;
    grid-template-columns: repeat(3, 16px);
    gap: 6px 8px;
}

.clock {
    flex: 1;
    display: flex;
    flex-direction: column;
    align-items: center;
    line-height: 20px;
}

/* Note */
.note {
    position: absolute;
    left: 456px;
    top: 522px;
    width: 213px;
    height: 156px;
    padding: 10px 0 0 6px;
    background-color: #fff;
    box-shadow: 2px 2px 5px #444;
    color: #e00000;
    font-family: "Liberation Serif", "Noto Sans CJK SC", serif;
    font-size: 25px;
    line-height: 24px;
    white-space: nowrap;
}

.note b {
    font-size: 24px;
}

/* Spreadsheet window */
.excel {
    position: absolute;
    left: 1048px;
    right: 0;
    top: 140px;
    height: 581px;
    padding-left: 4px;
    display: flex;
    flex-direction: column;
    overflow: hidden;
    border-radius: 6px 0 0 6px;
    background-color: #bfdbff;
    box-shadow: inset 1px 1px #7a9ac8;
    font-family: "Noto Sans", "Noto Sans CJK SC", sans-serif;
    color: #15428b;
}

.x-title {
    height: 29px;
    display: flex;
    align-items: center;
    gap: 6px;
    margin-left: -3px;
    background: linear-gradient(#e8f1fc, #cadcf3);
    white-space: nowrap;
}

.orb {
    position: relative;
    z-index: 1;
    top: 12px;
    left: 5px;
    width: 38px;
    height: 38px;
    padding: 6px;
    border: 1px solid #8090a8;
    border-radius: 50%;
    background: radial-gradient(#fff, #c4d0e0);
}

.qat {
    display: flex;
    align-items: center;
    gap: 9px;
    height: 22px;
    padding: 0 9px 0 10px;
    border: 1px solid #9cb4d8;
    border-left: none;
    border-radius: 0 11px 11px 0;
    background-color: #d4e3f6;
}

.x-name {
    margin-left: auto;
    color: #6a6f78;
    font-size: 12px;
}

.x-name b {
    color: #3a6ab0;
    font-weight: normal;
}

.x-tabs {
    height: 27px;
    display: flex;
    align-items: flex-end;
    padding-left: 44px;
    gap: 5px;
}

.x-tabs button {
    height: 26px;
    padding: 0 12px 2px;
}

.x-tabs .on {
    background-color: #eaf3fd;
    border: 1px solid #8db2e3;
    border-bottom: none;
    border-radius: 3px 3px 0 0;
}

.ribbon {
    height: 106px;
    display: flex;
    gap: 4px;
    padding: 3px 0 3px 3px;
    border-top: 1px solid #8db2e3;
    background-color: #d4e4f6;
}

.group {
    flex: none;
    display: flex;
    flex-direction: column;
    border: 1px solid #a4bede;
    border-radius: 3px;
    background: linear-gradient(#dee9f6, #c8daf0);
}

.g-clip {
    width: 71px;
}

.g-font {
    width: 233px;
}

.g-align {
    width: 164px;
}

.g-num {
    width: 120px;
}

.g-body {
    flex: 1;
    min-height: 0;
    display: flex;
    padding: 3px 2px;
}

.g-body.rows {
    flex-direction: column;
    gap: 10px;
    padding: 9px 3px 0;
}

.g-num .g-body.rows {
    align-items: flex-start;
    gap: 3px;
    padding: 1px 2px;
}

.g-name {
    height: 18px;
    position: relative;
    background-color: #c1d8f1;
    color: #3e6aaa;
    line-height: 17px;
    text-align: center;
    font-size: 12px;
}

.g-clip .g-name {
    padding-right: 18px;
}

.g-align .g-name {
    padding-right: 20px;
}

.g-num .g-name {
    padding-right: 55px;
}

.g-name i {
    position: absolute;
    right: 5px;
    top: 4px;
    width: 6px;
    height: 6px;
    border: 1px solid #6a8cbc;
    border-right: none;
    border-bottom: none;
    box-shadow: 2px 2px 0 -1px #6a8cbc;
}

.paste {
    width: 42px;
    display: flex;
    flex-direction: column;
    align-items: center;
    gap: 2px;
}

.clip-col {
    display: flex;
    flex-direction: column;
    justify-content: space-between;
    align-items: center;
    padding: 2px 0 12px 2px;
}

.g-row {
    display: flex;
    align-items: center;
    gap: 4px;
    height: 25px;
}

.arr {
    width: 0;
    border: 3px solid transparent;
    border-top-color: #5a7aa8;
    border-bottom: none;
}

.combo {
    display: flex;
    align-items: center;
    height: 25px;
    padding: 0 5px 0 2px;
    border: 1px solid #b4cae6;
    background-color: #eaf2fb;
    color: #000;
}

.combo select {
    flex: 1;
}

.combo.font {
    width: 131px;
}

.combo.size {
    width: 47px;
    margin-left: -4px;
}

.g-num .combo {
    width: 110px;
}

.set {
    display: flex;
    align-items: center;
    justify-content: space-around;
    height: 22px;
    border: 1px solid #8fb0dc;
    border-radius: 2px;
    background-color: #d0e0f3;
    color: #222;
}

.set button, .wrap {
    height: 20px;
    min-width: 20px;
    display: flex;
    align-items: center;
    justify-content: center;
    font-family: "Liberation Serif", serif;
}

.on.wrap, .set .on {
    background: linear-gradient(#fdd9a0, #ffb84c);
}

.wrap {
    width: 22px;
}

.g-row .set + .wrap {
    margin-left: auto;
}

.on.wrap {
    margin-right: 11px;
    border: 1px solid #b8985c;
}

.grow {
    flex: 1;
}

.w31 {
    width: 31px;
}

.w34 {
    width: 34px;
}

.w45 {
    width: 45px;
}

.w66 {
    width: 66px;
}

.w68 {
    width: 69px;
}

.w79 {
    width: 79px;
}

.set.wide {
    width: 90px;
    justify-content: flex-start;
    gap: 4px;
    padding-left: 1px;
}

.set .big {
    font-size: 17px;
    font-weight: bold;
}

.set .small {
    font-size: 13px;
    font-weight: bold;
}

.tri {
    align-self: flex-start;
    margin-top: 3px;
    border: 2px solid transparent;
    border-top: 3px solid #2a5ac8;
    border-bottom: none;
}

.tri.up {
    border-top: none;
    border-bottom: 3px solid #2a5ac8;
}

.set .b, .set .it, .set .un {
    font-size: 15px;
    font-weight: bold;
}

.set .it {
    font-style: italic;
}

.set .un {
    text-decoration: underline;
}

.set .fc {
    height: 18px;
    min-width: 16px;
    border-bottom: 4px solid #e01010;
    color: #2f4f8f;
    font-size: 15px;
    font-weight: bold;
}

.set .wen {
    flex-direction: column;
    font-family: "Noto Sans CJK SC", sans-serif;
    font-size: 11px;
    line-height: 10px;
    color: #3038b8;
}

.wen small {
    font-size: 9px;
    line-height: 8px;
    color: #000;
}

.set.dec {
    width: 45px;
}

.set.dec button {
    font-family: "Liberation Sans", sans-serif;
    font-size: 10px;
    line-height: 9px;
    text-align: right;
}

.ln {
    fill: none;
    stroke: #000;
}

.formula {
    height: 22px;
    display: flex;
    align-items: center;
    margin: 2px 0;
    background-color: #fff;
    border-top: 1px solid #6d94c8;
    border-bottom: 3px solid #c4d8f0;
    font-family: "Liberation Serif", "Noto Sans CJK SC", serif;
    font-size: 15px;
    color: #000;
}

.cell-ref {
    width: 138px;
    text-align: center;
}

.arr.black {
    margin: 0 8px 0 5px;
    border-top-color: #000;
}

.fx {
    width: 76px;
    height: 18px;
    display: flex;
    align-items: center;
    justify-content: space-between;
    padding: 0 6px 0 5px;
    border: 1px solid #8aaad4;
    border-radius: 10px 0 0 10px;
    background: linear-gradient(#eaf2fc, #a8c4e8);
}

.fx b {
    width: 9px;
    height: 9px;
    border-radius: 50%;
    background-color: #c4ccd8;
}

.cell-text {
    flex: 1;
    min-width: 0;
    padding-left: 12px;
}

.grid {
    flex: 1;
    min-height: 0;
    overflow: hidden;
    background-color: #fff;
    font-family: "Liberation Serif", "Noto Sans CJK SC", serif;
    font-size: 16px;
    color: #000;
}

.grid table {
    width: 100%;
    table-layout: fixed;
    border-collapse: separate;
    border-spacing: 0;
}

.c-num {
    width: 33px;
}

.c-a {
    width: 149px;
}

.grid th {
    height: 19px;
    padding: 0;
    font-weight: normal;
    line-height: 18px;
    color: #34506e;
    background-color: #e2ebf6;
    border-right: 1px solid #9eb6ce;
    border-bottom: 1px solid #9eb6ce;
}

.grid thead th {
    height: 20px;
    background: linear-gradient(#f6f9fc, #d4dde8);
}

.grid thead .corner {
    background: linear-gradient(135deg, #a9c4e9 70%, #e8f0fa 70%);
}

.grid thead .col-b {
    padding-left: 268px;
    text-align: left;
    background: linear-gradient(#f8d28c, #f0bc5c);
}

.grid td {
    height: 19px;
    padding: 0 0 0 2px;
    border-bottom: 1px solid #000;
    line-height: 18px;
    white-space: nowrap;
    overflow: hidden;
}

.grid td:nth-child(2) {
    border-right: 2px solid #000;
}

.grid .current th {
    background-color: #ffcf86;
}

.grid .current td {
    line-height: 17px;
}

.grid .current td:last-child {
    border-top: 1px solid #000;
}

.sheets {
    height: 17px;
    display: flex;
    align-items: center;
    padding-left: 3px;
    background-color: #9fbce2;
    border-bottom: 1px solid #5e84b8;
}

.sheets button {
    width: 54px;
    height: 16px;
    margin-left: 3px;
    background-color: #f4f8fe;
    line-height: 15px;
}

.hscroll {
    width: 6px;
    height: 14px;
    margin: 0 5px 0 auto;
    border: 1px solid #5878a8;
    background-color: #e8f0fc;
}

.status {
    height: 21px;
    padding-left: 5px;
    background: linear-gradient(#dbe9fb, #b4cff4 50%, #c8dcf8);
    line-height: 20px;
}

.status span {
    display: inline-block;
    width: 34px;
    border-right: 1px solid #90b0dc;
}

/* Red mark over the sheet */
.mark {
    position: absolute;
    left: 1169px;
    right: 1px;
    top: 486px;
    height: 40px;
    border: 4px solid #f80000;
    box-shadow: 2px 3px 4px #777, inset 2px 3px 4px #999;
}
```
